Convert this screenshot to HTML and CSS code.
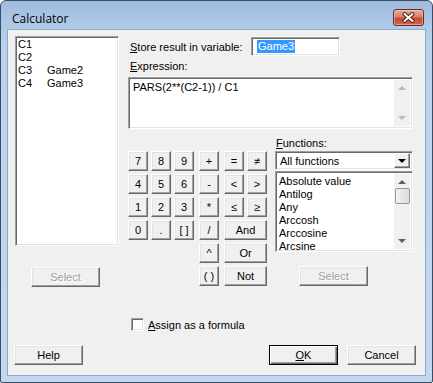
FILE: index.html
```html
<!DOCTYPE html>
<html lang="en">
<head>
  <meta charset="UTF-8">
  <meta name="viewport" content="width=device-width, initial-scale=1.0">
  <title>Calculator</title>
  <link rel="stylesheet" href="styles.css">
</head>
<body>
  <div class="window">
    <div class="titlebar">
      <span class="title">Calculator</span>
      <button class="close-btn" aria-label="Close">
        <svg width="29" height="15" viewBox="0 0 29 15">
          <path d="M10.5 4 L18.5 11 M18.5 4 L10.5 11" stroke="#4a1c16" stroke-width="4" stroke-linecap="round"/>
          <path d="M10.5 4 L18.5 11 M18.5 4 L10.5 11" stroke="#ffffff" stroke-width="2" stroke-linecap="round"/>
        </svg>
      </button>
    </div>

    <div class="client">
      <div class="main">
        <div class="vars-col">
          <div class="field listbox vars">
            <div class="item"><span class="col">C1</span></div>
            <div class="item"><span class="col">C2</span></div>
            <div class="item"><span class="col">C3</span>Game2</div>
            <div class="item"><span class="col">C4</span>Game3</div>
          </div>
          <button class="btn disabled sel-left">Select</button>
        </div>

        <div class="work">
          <div class="store-row">
            <label class="store-label"><u>S</u>tore result in variable:</label>
            <div class="field store"><span class="selected">Game3</span></div>
          </div>

          <label class="expr-label"><u>E</u>xpression:</label>
          <div class="field expr">
            <div class="expr-text">PARS(2**(C2-1)) / C1</div>
            <div class="vscroll off">
              <span class="arrow up"></span>
              <span class="arrow down"></span>
            </div>
          </div>

          <div class="lower">
            <div class="keypad">
              <button class="btn key">7</button>
              <button class="btn key">8</button>
              <button class="btn key">9</button>
              <button class="btn key op">+</button>
              <button class="btn key op">=</button>
              <button class="btn key">&ne;</button>

              <button class="btn key">4</button>
              <button class="btn key">5</button>
              <button class="btn key">6</button>
              <button class="btn key op">-</button>
              <button class="btn key op">&lt;</button>
              <button class="btn key">&gt;</button>

              <button class="btn key">1</button>
              <button class="btn key">2</button>
              <button class="btn key">3</button>
              <button class="btn key op">*</button>
              <button class="btn key op">&le;</button>
              <button class="btn key">&ge;</button>

              <button class="btn key">0</button>
              <button class="btn key">.</button>
              <button class="btn key">[ ]</button>
              <button class="btn key op">/</button>
              <button class="btn key wide">And</button>

              <button class="btn key op col4">^</button>
              <button class="btn key wide">Or</button>

              <button class="btn key op col4">( )</button>
              <button class="btn key wide">Not</button>
            </div>

            <div class="funcs">
              <label class="funcs-label"><u>F</u>unctions:</label>
              <div class="field combo">
                <span class="combo-text">All functions</span>
                <span class="drop"><span class="tri"></span></span>
              </div>
              <div class="field listbox funcs-list">
                <div class="items">
                  <div class="item">Absolute value</div>
                  <div class="item">Antilog</div>
                  <div class="item">Any</div>
                  <div class="item">Arccosh</div>
                  <div class="item">Arccosine</div>
                  <div class="item">Arcsine</div>
                </div>
                <div class="vscroll">
                  <span class="arrow up"></span>
                  <span class="thumb"></span>
                  <span class="arrow down"></span>
                </div>
              </div>
              <button class="btn disabled sel-right">Select</button>
            </div>
          </div>
        </div>
      </div>

      <div class="assign">
        <span class="checkbox"></span>
        <span><u>A</u>ssign as a formula</span>
      </div>

      <div class="footer">
        <button class="btn">Help</button>
        <button class="btn default"><u>O</u>K</button>
        <button class="btn">Cancel</button>
      </div>
    </div>
  </div>
</body>
</html>
```

FILE: styles.css
```css
* {
  box-sizing: border-box;
}

body {
  margin: 0;
  font-family: 'Liberation Sans', Arial, sans-serif;
  font-size: 11px;
  color: #000;
  background: #ffffff;
}

u {
  text-decoration: underline;
  text-underline-offset: 1px;
}

/* window frame */
.window {
  width: 433px;
  height: 383px;
  border: 1px solid #3b4d63;
  border-radius: 6px 6px 2px 2px;
  background: linear-gradient(180deg, #9fbbde 0px, #adc8e7 22px, #bad2ec 45px, #c2d8f0 100%);
  padding: 0 7px 7px;
  display: flex;
  flex-direction: column;
}

.titlebar {
  height: 29px;
  display: flex;
  justify-content: space-between;
  align-items: flex-start;
}

.title {
  font-family: 'Open Sans', 'Noto Sans', sans-serif;
  font-size: 12px;
  margin: 9px 0 0 4px;
  color: #000;
}

.close-btn {
  width: 31px;
  height: 17px;
  margin: 8px 1px 0 0;
  padding: 0;
  border: 1px solid #6a2a22;
  border-radius: 3px;
  background: linear-gradient(180deg, #e9a99b 0%, #d97f6d 45%, #c44a35 55%, #cf6a55 100%);
  box-shadow: inset 0 0 0 1px rgba(255, 255, 255, 0.35);
  display: flex;
  align-items: center;
  justify-content: center;
}

.close-btn svg {
  display: block;
}

.client {
  width: 417px;
  height: 345px;
  background: #f0f0f0;
  box-shadow: 0 0 0 1px #8fa8c6;
}

/* classic 3d controls */
.btn {
  height: 20px;
  padding: 0;
  font-family: inherit;
  font-size: 11px;
  color: #000;
  background: #f0f0f0;
  border: 1px solid;
  border-color: #ffffff #696969 #696969 #ffffff;
  box-shadow: inset -1px -1px #a0a0a0, inset 1px 1px #e3e3e3;
}

.btn.disabled {
  color: #a0a0a0;
  text-shadow: 1px 1px #ffffff;
}

.btn.default {
  border: 1px solid #000;
  box-shadow: inset 1px 1px #ffffff, inset -1px -1px #696969, inset -2px -2px #a0a0a0;
}

.field {
  background: #ffffff;
  border: 1px solid;
  border-color: #a0a0a0 #ffffff #ffffff #a0a0a0;
  box-shadow: inset 1px 1px #696969, inset -1px -1px #e3e3e3;
}

.item {
  height: 13px;
  line-height: 13px;
  white-space: nowrap;
}

/* main area */
.main {
  display: flex;
  padding: 6px 0 0 7px;
  height: 256px;
}

.vars-col {
  width: 104px;
}

.vars {
  height: 210px;
  padding: 1px 1px 0 2px;
}

.vars .col {
  display: inline-block;
  width: 29px;
}

.sel-left {
  width: 69px;
  margin: 21px 0 0 16px;
}

.work {
  width: 285px;
  margin-left: 9px;
}

.store-row {
  display: flex;
  align-items: center;
  margin-top: 1px;
}

.store-label {
  width: 123px;
  padding-left: 2px;
}

.store {
  width: 89px;
  height: 19px;
  padding: 2px 0 0 5px;
  line-height: 13px;
}

.selected {
  display: inline-block;
  background: #3399ff;
  color: #ffffff;
  padding: 0 1px;
}

.expr-label {
  display: block;
  margin-top: 4px;
  padding-left: 2px;
  line-height: 13px;
}

.expr {
  display: flex;
  height: 52px;
  margin-top: 4px;
}

.expr-text {
  flex: 1;
  padding: 3px 0 0 4px;
  line-height: 13px;
}

/* scrollbars */
.vscroll {
  width: 16px;
  margin: 2px 2px 2px 0;
  background: #f0f0f0;
  display: flex;
  flex-direction: column;
  align-items: center;
  padding: 6px 0;
}

.arrow {
  width: 0;
  height: 0;
  border-left: 4px solid transparent;
  border-right: 4px solid transparent;
}

.arrow.up {
  border-bottom: 4px solid #606060;
}

.arrow.down {
  border-top: 4px solid #606060;
  margin-top: auto;
}

.vscroll.off .arrow.up {
  border-bottom-color: #b8b8b8;
}

.vscroll.off .arrow.down {
  border-top-color: #b8b8b8;
}

.thumb {
  width: 15px;
  height: 16px;
  margin-top: 4px;
  border: 1px solid #9a9a9a;
  border-radius: 2px;
  background: linear-gradient(90deg, #f3f3f3, #e6e6e6 50%, #dcdcdc);
}

/* keypad and functions */
.lower {
  display: flex;
  margin-top: 8px;
}

.keypad {
  display: grid;
  grid-template-columns: 20px 20px 20px 22px 22px 20px;
  grid-auto-rows: 20px;
  gap: 3px;
  margin-top: 14px;
  align-self: flex-start;
}

.key.op {
  margin-left: 2px;
}

.key.col4 {
  grid-column: 4;
}

.key.wide {
  grid-column: span 2;
  margin-left: 2px;
}

.funcs {
  width: 138px;
  margin-left: 8px;
}

.funcs-label {
  display: block;
  line-height: 13px;
  padding-left: 1px;
}

.combo {
  display: flex;
  align-items: center;
  height: 19px;
  margin-top: 1px;
  padding: 0 2px 0 4px;
}

.combo-text {
  flex: 1;
}

.drop {
  width: 16px;
  height: 15px;
  background: #f0f0f0;
  border: 1px solid;
  border-color: #ffffff #696969 #696969 #ffffff;
  box-shadow: inset -1px -1px #a0a0a0;
  display: flex;
  align-items: center;
  justify-content: center;
}

.tri {
  width: 0;
  height: 0;
  border-left: 4px solid transparent;
  border-right: 4px solid transparent;
  border-top: 4px solid #000;
}

.funcs-list {
  display: flex;
  height: 81px;
  margin-top: 1px;
}

.funcs-list .items {
  flex: 1;
  padding: 3px 0 0 3px;
}

.sel-right {
  width: 69px;
  margin: 14px 0 0 24px;
}

/* bottom */
.assign {
  display: flex;
  align-items: center;
  gap: 4px;
  margin-top: 32px;
  padding-left: 123px;
  height: 13px;
}

.checkbox {
  width: 13px;
  height: 13px;
  background: #ffffff;
  border: 1px solid;
  border-color: #a0a0a0 #ffffff #ffffff #a0a0a0;
  box-shadow: inset 1px 1px #696969, inset -1px -1px #e3e3e3;
}

.footer {
  display: flex;
  gap: 9px;
  margin-top: 14px;
  padding: 0 9px 0 6px;
}

.footer .btn {
  width: 69px;
}

.footer .btn:first-child {
  margin-right: auto;
}
```
